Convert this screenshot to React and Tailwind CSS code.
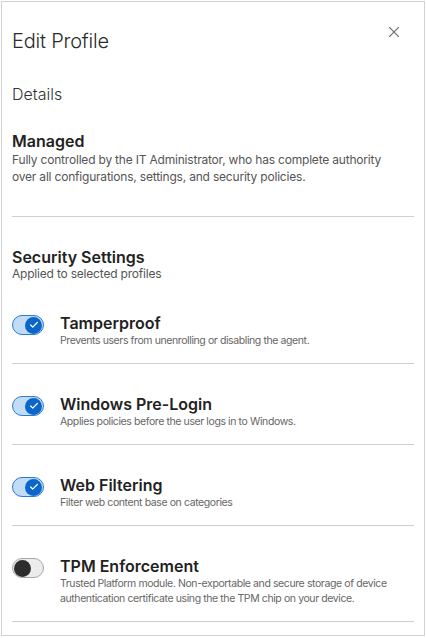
import { X, Check } from "lucide-react";

const settings = [
  {
    title: "Tamperproof",
    desc: "Prevents users from unenrolling or disabling the agent.",
    on: true,
  },
  {
    title: "Windows Pre-Login",
    desc: "Applies policies before the user logs in to Windows.",
    on: true,
  },
  {
    title: "Web Filtering",
    desc: "Filter web content base on categories",
    on: true,
  },
  {
    title: "TPM Enforcement",
    desc: "Trusted Platform module. Non-exportable and secure storage of device authentication certificate using the the TPM chip on your device.",
    on: false,
  },
];

const Toggle = ({ on }) =>
  on ? (
    <div className="w-[32px] h-[20px] rounded-full bg-[#c3dcf5] border border-[#2a7ad6] flex items-center justify-end pr-px">
      <div className="w-[17px] h-[17px] rounded-full bg-[#0a66c8] flex items-center justify-center">
        <Check size={10} strokeWidth={3} className="text-white" />
      </div>
    </div>
  ) : (
    <div className="w-[32px] h-[20px] rounded-full bg-[#ececec] border border-[#a8a8a8] flex items-center pl-px">
      <div className="w-[17px] h-[17px] rounded-full bg-[#2d2d2d]" />
    </div>
  );

const App = () => {
  return (
    <div
      className="p-px bg-white h-[638px]"
      style={{ fontFamily: "Inter, 'Noto Sans', sans-serif" }}
    >
      <div className="border border-[#d2d2d2] h-[635px] px-[10px] text-[#222]">
        <div className="flex justify-between items-start pt-[25px]">
          <h1 className="text-[20px] leading-[28px] font-light text-[#2b2b2b] tracking-[-0.2px]">
            Edit Profile
          </h1>
          <button className="mt-[-4px] mr-[11px] text-[#777]">
            <X size={18} strokeWidth={1.5} />
          </button>
        </div>

        <p className="mt-[29px] text-[16px] leading-[20px] font-light text-[#333]">
          Details
        </p>

        <div className="mt-[27px]">
          <h2 className="text-[16px] leading-[20px] font-semibold text-[#222]">
            Managed
          </h2>
          <p className="pr-[24px] text-[12px] leading-[17px] text-[#555] tracking-[-0.2px]">
            Fully controlled by the IT Administrator, who has complete authority
            over all configurations, settings, and security policies.
          </p>
        </div>

        <div className="mt-[31px] border-t border-[#cfcfcf]" />

        <div className="mt-[32px]">
          <h2 className="text-[16px] leading-[17px] font-semibold text-[#222]">
            Security Settings
          </h2>
          <p className="text-[12px] leading-[15px] text-[#555] tracking-[-0.2px]">
            Applied to selected profiles
          </p>
        </div>

        <div className="mt-[2px]">
          {settings.map((s) => (
            <div
              key={s.title}
              className="flex gap-[16px] pt-[30px] pb-[15px] border-b border-[#cfcfcf]"
            >
              <div className="mt-[2px] shrink-0">
                <Toggle on={s.on} />
              </div>
              <div>
                <div className="text-[16px] leading-[20px] font-semibold text-[#222]">
                  {s.title}
                </div>
                <div className="text-[10.5px] leading-[15px] text-[#666] tracking-[-0.4px]">
                  {s.desc}
                </div>
              </div>
            </div>
          ))}
        </div>
      </div>
    </div>
  );
};

export default App;
